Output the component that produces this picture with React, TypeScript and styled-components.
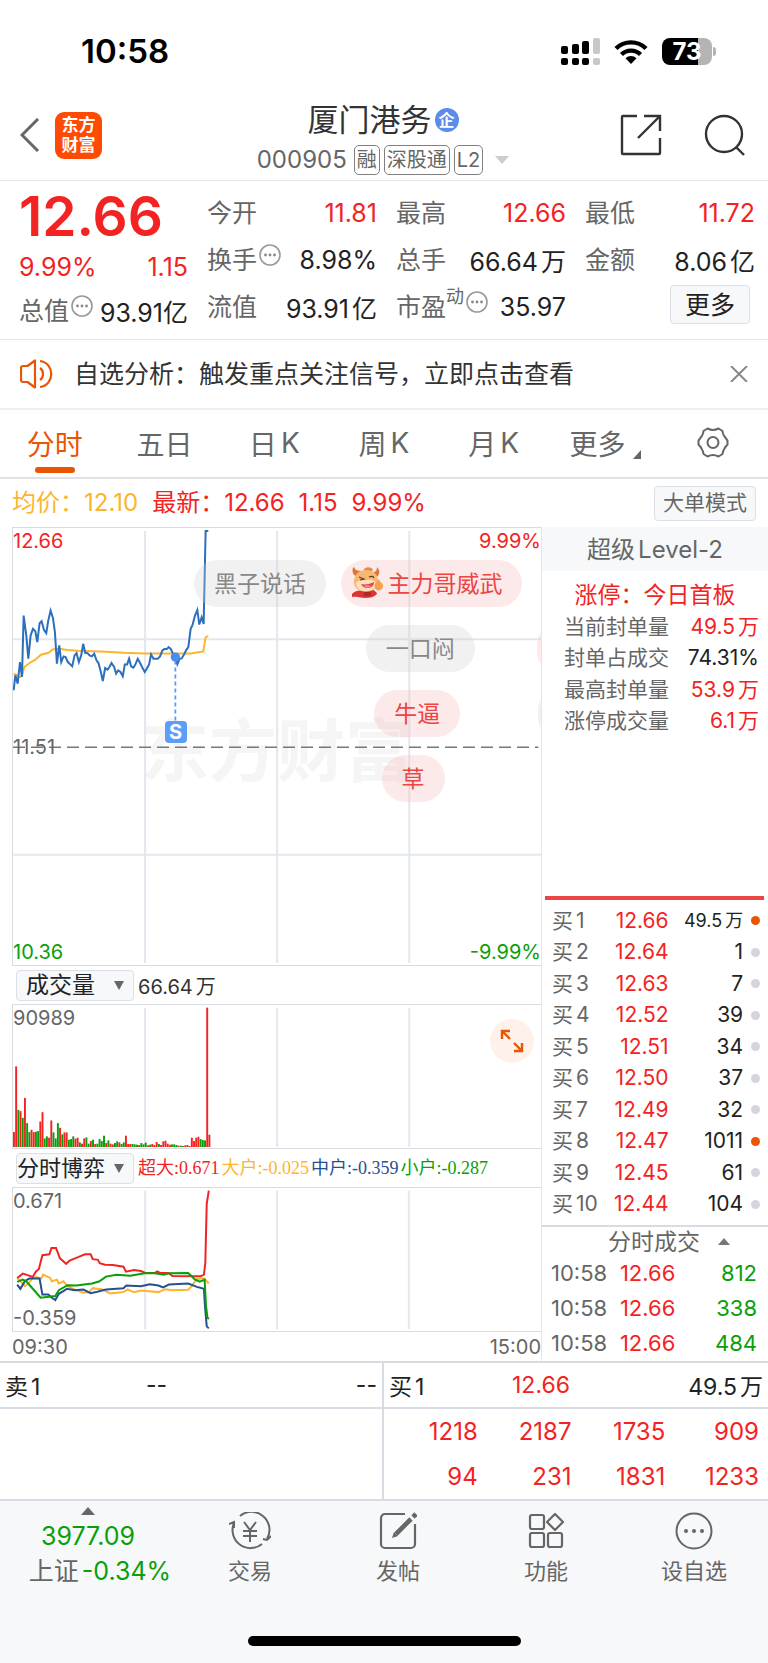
import React from 'react';
import styled, { createGlobalStyle } from 'styled-components';

const c = {
  red: '#f32323',
  green: '#0a9f0a',
  orange: '#ea5504',
  amber: '#fdb52e',
  ink: '#222',
  text: '#333',
  mute: '#666',
  line: '#e4e6ea',
  lineDark: '#d8dbe1',
  grid: '#e3e7ee',
  panel: '#f6f8fa',
  blue: '#2b6fbd',
  navy: '#27508f',
};

const GlobalStyle = createGlobalStyle`
  * { box-sizing: border-box; }
  body {
    margin: 0;
    background: #fff;
    color: ${c.text};
    font-family: Inter, "Noto Sans CJK SC", sans-serif;
    font-size: 22px;
  }
  button, select {
    margin: 0;
    padding: 0;
    border: 0;
    background: none;
    color: inherit;
    font: inherit;
  }
  svg { display: block; flex: none; }
  table { border-collapse: collapse; }
  td, th { padding: 0; font-weight: 400; }
`;

type Tone = 'red' | 'green' | 'ink' | 'mute';

const Page = styled.div`
  display: flex;
  flex-direction: column;
  min-width: 640px;
  min-height: 100vh;
`;

/* ---------- status bar ---------- */
const StatusBar = styled.div`
  display: flex;
  align-items: center;
  justify-content: space-between;
  height: 90px;
  padding: 12px 52px 0 81px;
  color: #000;
`;
const Clock = styled.time`
  font-size: 33px;
  font-weight: 600;
`;
const StatusIcons = styled.div`
  display: flex;
  align-items: center;
  gap: 14px;
`;
const Battery = styled.div`
  display: flex;
  align-items: center;
  gap: 1px;
`;
const BatteryBody = styled.div`
  width: 50px;
  height: 27px;
  border-radius: 8px;
  background: linear-gradient(90deg, #000 73%, #b4b4b4 73%);
  color: #fff;
  font-size: 24px;
  font-weight: 700;
  line-height: 27px;
  text-align: center;
`;
const BatteryTip = styled.div`
  width: 3px;
  height: 9px;
  border-radius: 0 3px 3px 0;
  background: #b4b4b4;
`;

/* ---------- header ---------- */
const Header = styled.header`
  display: grid;
  grid-template-columns: 1fr auto 1fr;
  align-items: center;
  height: 91px;
  padding: 0 22px 0 20px;
  border-bottom: 1px solid ${c.line};
`;
const HeaderSide = styled.div<{ $end?: boolean }>`
  display: flex;
  align-items: center;
  justify-content: ${(p) => (p.$end ? 'flex-end' : 'flex-start')};
  gap: ${(p) => (p.$end ? 42 : 15)}px;
`;
const IconButton = styled.button`
  display: flex;
  align-items: center;
  justify-content: center;
`;
const Logo = styled.div`
  display: flex;
  flex-direction: column;
  align-items: center;
  justify-content: center;
  width: 47px;
  height: 47px;
  border-radius: 9px;
  background: #ff4a03;
  color: #fff;
  font-size: 17px;
  font-weight: 700;
  line-height: 20px;
`;
const StockTitle = styled.div`
  display: flex;
  flex-direction: column;
  align-items: center;
  padding-top: 8px;
`;
const StockName = styled.h1`
  display: flex;
  align-items: center;
  gap: 3px;
  margin: 0;
  font-size: 31px;
  font-weight: 400;
  line-height: 42px;
`;
const CorpBadge = styled.span`
  width: 24px;
  height: 24px;
  border-radius: 50%;
  background: #5c8cea;
  color: #fff;
  font-size: 16px;
  font-weight: 700;
  line-height: 24px;
  text-align: center;
`;
const StockCode = styled.div`
  display: flex;
  align-items: center;
  gap: 4px;
  color: ${c.mute};
  font-size: 24px;
  line-height: 38px;
`;
const CodeText = styled.span`
  margin-right: 3px;
`;
const Tag = styled.span`
  padding: 0 2px;
  border: 1px solid #808080;
  border-radius: 5px;
  font-size: 20px;
  line-height: 28px;
`;
const CodeCaret = styled.svg`
  margin-left: 8px;
`;

/* ---------- quote summary ---------- */
const Quote = styled.section`
  display: grid;
  grid-template-columns: 169fr 548fr;
  gap: 19px;
  padding: 8px 13px 9px 19px;
  border-bottom: 1px solid ${c.line};
`;
const QuoteLead = styled.div`
  display: flex;
  flex-direction: column;
`;
const LastPrice = styled.div`
  color: ${c.red};
  font-size: 55px;
  font-weight: 600;
  line-height: 54px;
`;
const ChangeRow = styled.div`
  display: flex;
  justify-content: space-between;
  color: ${c.red};
  font-size: 25px;
  line-height: 48px;
`;
const QuoteGrid = styled.div`
  display: grid;
  grid-template-columns: repeat(3, 1fr);
  column-gap: 19px;
`;
const Stat = styled.div<{ $height?: number }>`
  display: flex;
  align-items: center;
  justify-content: space-between;
  height: ${(p) => p.$height ?? 47}px;
  white-space: nowrap;
`;
const StatLabel = styled.span`
  display: flex;
  align-items: center;
  padding-bottom: 4px;
  color: ${c.mute};
  font-size: 25px;
`;
const StatValue = styled.span<{ $tone?: Tone }>`
  color: ${(p) => c[p.$tone ?? 'ink']};
  font-size: 25px;
`;
const Raised = styled.span`
  align-self: flex-start;
  font-size: 18px;
  line-height: 20px;
`;
const RaisedDots = styled.svg`
  align-self: flex-start;
  margin: 4px 0 0 2px;
`;
const MoreButton = styled.button`
  width: 80px;
  height: 39px;
  margin: 0 5px 4px auto;
  border: 1px solid #dcdfe5;
  border-radius: 4px;
  background: ${c.panel};
  color: ${c.ink};
  font-size: 25px;
  line-height: 34px;
`;
const Unit = styled.span`
  margin-left: 3px;
`;

/* ---------- notice ---------- */
const Notice = styled.section`
  display: flex;
  align-items: center;
  height: 70px;
  padding: 0 20px;
  border-bottom: 2px solid #eeeff1;
`;
const NoticeText = styled.p`
  flex: 1;
  margin: 0 0 4px 20px;
  font-size: 25px;
`;

/* ---------- period tabs ---------- */
const Tabs = styled.nav`
  display: grid;
  grid-template-columns: repeat(7, 1fr);
  height: 69px;
  border-bottom: 2px solid #dfe1e6;
`;
const Tab = styled.button<{ $active?: boolean }>`
  position: relative;
  display: flex;
  align-items: center;
  justify-content: center;
  gap: 4px;
  padding-bottom: 2px;
  color: ${(p) => (p.$active ? c.orange : c.mute)};
  font-size: 28px;
  &::after {
    content: '';
    display: ${(p) => (p.$active ? 'block' : 'none')};
    position: absolute;
    bottom: 4px;
    width: 40px;
    height: 6px;
    border-radius: 3px;
    background: ${c.orange};
  }
`;
const TabCorner = styled.svg`
  align-self: flex-end;
  margin: 0 -4px 16px 4px;
`;

/* ---------- average / last line ---------- */
const PriceLine = styled.div`
  display: flex;
  align-items: center;
  gap: 14px;
  height: 48px;
  padding: 0 12px;
  color: ${c.red};
  font-size: 24px;
  line-height: 30px;
`;
const Average = styled.span`
  color: ${c.amber};
`;
const ModeButton = styled.button`
  width: 102px;
  height: 35px;
  margin-left: auto;
  border: 1px solid #dcdfe5;
  border-radius: 4px;
  background: ${c.panel};
  color: ${c.mute};
  font-size: 21px;
`;

/* ---------- chart area ---------- */
const Board = styled.main`
  display: grid;
  grid-template-columns: minmax(0, 542fr) minmax(0, 226fr);
`;
const Charts = styled.section`
  display: flex;
  flex-direction: column;
  padding-left: 12px;
  border-right: 1px solid ${c.line};
`;
const Plot = styled.div<{ $height: number }>`
  position: relative;
  height: ${(p) => p.$height}px;
  overflow: hidden;
  border: 1px solid ${c.lineDark};
  border-width: 1px 0 1px 1px;
`;
const PlotSvg = styled.svg`
  width: 100%;
  height: 100%;
  path, line { vector-effect: non-scaling-stroke; }
`;
const PlotLabel = styled.span<{ $v: 'top' | 'bottom' | 'middle'; $right?: boolean; $color?: string }>`
  position: absolute;
  ${(p) => (p.$right ? 'right: 0;' : 'left: 0;')}
  ${(p) => ({ top: 'top: 0;', bottom: 'bottom: 0;', middle: 'top: calc(50% - 13px);' })[p.$v]}
  color: ${(p) => p.$color ?? c.mute};
  font-size: 20px;
  line-height: 26px;
`;
const Watermark = styled.span`
  position: absolute;
  left: 50%;
  top: 51%;
  transform: translate(-50%, -50%);
  color: #f5f5f6;
  font-size: 68px;
  font-weight: 700;
  line-height: 72px;
  white-space: nowrap;
`;
const Layer = styled.div`
  position: absolute;
  inset: 0;
`;
const Chip = styled.span<{ $x: number; $row: number; $hot?: boolean }>`
  position: absolute;
  left: ${(p) => p.$x}%;
  top: ${(p) => 32 + p.$row * 65}px;
  display: flex;
  align-items: center;
  gap: 4px;
  height: 47px;
  padding: 0 20px 4px;
  border-radius: 24px;
  background: ${(p) => (p.$hot ? 'rgba(246, 190, 190, 0.32)' : 'rgba(210, 210, 210, 0.3)')};
  color: ${(p) => (p.$hot ? '#ee4444' : '#888')};
  font-size: 23px;
  white-space: nowrap;
`;
const Mascot = styled.svg`
  margin-left: -10px;
`;
const SellMark = styled.span`
  position: absolute;
  left: 28.7%;
  top: 193px;
  width: 22px;
  height: 22px;
  border-radius: 4px;
  background: #5c9dfb;
  color: #fff;
  font-size: 20px;
  font-weight: 700;
  line-height: 22px;
  text-align: center;
`;
const ChartBar = styled.div`
  display: flex;
  align-items: center;
  gap: 4px;
  height: 38px;
  padding-left: 4px;
`;
const Picker = styled.label`
  position: relative;
  display: flex;
  align-items: center;
  color: ${c.mute};
`;
const PickerSelect = styled.select<{ $indent: number }>`
  appearance: none;
  width: 118px;
  height: 31px;
  padding-left: ${(p) => p.$indent}px;
  border: 1px solid #dcdfe5;
  border-radius: 4px;
  background: ${c.panel};
  color: ${c.ink};
  font-size: ${(p) => (p.$indent ? 23 : 22)}px;
`;
const PickerCaret = styled.svg`
  position: absolute;
  right: 10px;
  pointer-events: none;
`;
const Total = styled.span`
  color: ${c.text};
  font-size: 20px;
`;
const Legend = styled.span`
  display: flex;
  gap: 2px;
  font-family: "Liberation Serif", "Noto Sans CJK SC", serif;
  font-size: 18px;
  line-height: 24px;
  white-space: nowrap;
`;
const LegendItem = styled.span<{ $color: string }>`
  color: ${(p) => p.$color};
`;
const ExpandButton = styled.button`
  position: absolute;
  right: 7px;
  top: 14px;
  display: flex;
  align-items: center;
  justify-content: center;
  width: 44px;
  height: 44px;
  border-radius: 50%;
  background: #fdf1ea;
`;
const TimeAxis = styled.div`
  display: flex;
  align-items: center;
  justify-content: space-between;
  height: 29px;
  color: ${c.mute};
  font-size: 20px;
`;

/* ---------- level-2 side ---------- */
const Side = styled.aside`
  display: flex;
  flex-direction: column;
`;
const SideTitle = styled.h2`
  height: 44px;
  margin: 0;
  background: ${c.panel};
  color: ${c.mute};
  font-size: 24px;
  font-weight: 400;
  line-height: 46px;
  text-align: center;
`;
const LimitTitle = styled.p`
  margin: 8px 0 0;
  color: ${c.red};
  font-size: 23px;
  line-height: 32px;
  text-align: center;
`;
const LimitTable = styled.table`
  width: 100%;
  height: 126px;
  color: ${c.mute};
  font-size: 21px;
  line-height: 26px;
  white-space: nowrap;
  th { padding-left: 22px; text-align: left; }
  td { padding-right: 9px; text-align: right; }
`;
const ToneCell = styled.td<{ $tone: Tone; $small?: boolean }>`
  color: ${(p) => c[p.$tone]};
  ${(p) => (p.$small ? 'font-size: 18px;' : '')}
`;
const BidRule = styled.div`
  height: 4px;
  margin: auto 4px 5px 3px;
  background: #ec4545;
`;
const BidTable = styled.table`
  width: 100%;
  height: 315px;
  table-layout: fixed;
  font-size: 21px;
  line-height: 26px;
  white-space: nowrap;
  th { padding-left: 10px; color: ${c.mute}; text-align: left; }
  td { text-align: right; }
`;
const Col = styled.col<{ $share: number }>`
  width: ${(p) => p.$share}%;
`;
const Dot = styled.span<{ $on?: boolean }>`
  display: block;
  width: 9px;
  height: 9px;
  margin: 0 8px 0 auto;
  border-radius: 50%;
  background: ${(p) => (p.$on ? c.orange : '#d3d7dd')};
`;
const TradesToggle = styled.button`
  display: flex;
  align-items: center;
  justify-content: center;
  gap: 18px;
  height: 31px;
  margin-top: 5px;
  padding-left: 28px;
  border-top: 2px solid ${c.lineDark};
  color: ${c.mute};
  font-size: 23px;
  line-height: 26px;
`;
const TradeTable = styled.table`
  width: 100%;
  table-layout: fixed;
  font-size: 22px;
  line-height: 35px;
  th { padding-left: 9px; color: ${c.mute}; text-align: left; }
  td { text-align: right; }
  td:last-child { padding-right: 11px; }
`;

/* ---------- order depth strip ---------- */
const Depth = styled.section`
  display: grid;
  grid-template-columns: 382fr 386fr;
  border-top: 2px solid ${c.lineDark};
  border-bottom: 2px solid ${c.lineDark};
`;
const DepthSide = styled.div`
  & + & { border-left: 2px solid ${c.lineDark}; }
`;
const DepthHead = styled.div`
  display: grid;
  grid-template-columns: 78px 1fr 1fr;
  align-items: center;
  height: 46px;
  padding: 0 5px;
  border-bottom: 2px solid ${c.lineDark};
  color: ${c.ink};
  font-size: 23px;
`;
const DepthPrice = styled.span<{ $tone: Tone }>`
  justify-self: center;
  color: ${(p) => c[p.$tone]};
`;
const DepthVolume = styled.span`
  justify-self: end;
`;
const QueueTable = styled.table`
  width: calc(100% - 9px);
  table-layout: fixed;
  color: ${c.red};
  font-size: 24px;
  line-height: 45px;
  td { text-align: right; }
`;

/* ---------- bottom navigation ---------- */
const Footer = styled.footer`
  display: flex;
  flex: 1;
  flex-direction: column;
  justify-content: space-between;
  align-items: center;
  background: ${c.panel};
`;
const NavBar = styled.nav`
  display: grid;
  grid-template-columns: 176px repeat(4, 1fr);
  width: 100%;
  padding-top: 6px;
`;
const NavItem = styled.button`
  display: flex;
  flex-direction: column;
  align-items: center;
  gap: 4px;
  padding-top: 5px;
  color: ${c.mute};
  font-size: 22px;
  line-height: 34px;
`;
const IndexItem = styled.button`
  display: flex;
  flex-direction: column;
  align-items: center;
  color: ${c.green};
  font-size: 25px;
  line-height: 35px;
`;
const IndexCaret = styled.svg`
  margin-bottom: 4px;
`;
const IndexChange = styled.span`
  padding-left: 24px;
`;
const IndexName = styled.span`
  margin-right: 3px;
  color: ${c.mute};
`;
const HomeIndicator = styled.div`
  width: 273px;
  height: 10px;
  margin-bottom: 17px;
  border-radius: 5px;
  background: #000;
`;

/* ---------- data ---------- */
const PRICE =
  '38,510 43,465 50,490 57,425 63,470 68,285 76,345 82,415 89,345 96,325 103,332 109,365 116,308 122,302 129,328 136,338 142,300 149,270 156,292 162,335 168,430 175,375 181,425 188,408 194,410 201,425 208,432 214,438 221,405 227,398 234,425 241,405 247,370 253,397 260,398 266,405 273,408 280,400 287,420 293,428 300,455 306,482 313,443 320,448 326,440 332,428 340,440 346,460 352,450 359,455 366,468 372,432 379,432 385,415 391,438 398,442 404,432 411,415 418,428 425,442 432,455 438,445 445,432 451,402 458,415 471,415 478,408 485,390 491,386 498,386 504,380 510,385 517,400 524,412 530,432 537,415 543,414 550,402 557,388 563,380 570,325 576,312 583,285 590,268 596,312 603,290 609,310 615,30 623,30';
const AVERAGE =
  '38,460 57,470 63,465 70,440 90,425 103,418 120,403 143,397 155,387 175,385 200,389 230,391 300,393 370,397 430,399 570,399 608,393 615,350 623,347';

const VOLUME =
  'r45 r243 g112 r108 g88 r148 g72 g45 r52 r45 g46 g48 r77 r105 g26 g32 r28 r80 g44 g26 g72 r58 g38 r44 r44 g22 g24 g32 r25 r28 g14 r10 r26 g29 g10 r18 g22 r9 g10 g24 g18 g34 r12 g20 r10 r8 g12 g17 r14 g9 g14 r34 r9 r9 g9 g8 g7 r6 g12 g8 g13 r5 g7 r9 r6 r15 g9 r6 r17 r19 r10 r7 g8 g8 g6 r4 g4 g3 r5 r6 r3 r28 r18 r28 r31 g24 g21 g20 r420 r37'
    .split(' ')
    .map((s) => ({ up: s[0] === 'r', size: Number(s.slice(1)) }));

const FLOWS = [
  {
    color: c.amber,
    points:
      '46,415 56,425 68,440 80,430 90,415 100,412 115,417 120,405 140,415 145,425 160,420 165,432 178,425 190,440 210,450 235,460 252,458 262,446 290,450 312,462 350,458 362,450 380,458 400,453 450,458 470,449 490,452 535,451 545,440 560,418 580,416 594,432',
  },
  {
    color: c.red,
    points:
      '46,415 62,402 80,408 90,412 100,395 108,388 118,346 138,343 144,324 157,324 168,355 186,372 196,362 220,352 240,343 256,343 262,358 277,360 282,370 297,375 320,376 350,381 357,396 380,391 400,394 412,400 440,400 446,395 455,400 478,400 490,409 570,410 580,405 584,370 588,190 594,150',
  },
  {
    color: c.navy,
    points:
      '46,435 55,448 68,425 80,417 110,417 118,465 135,465 145,475 155,482 165,463 178,455 188,448 210,452 235,450 256,461 275,457 300,450 350,446 358,438 400,440 425,434 450,438 463,444 480,435 535,432 560,442 580,448 583,500 588,562 594,568',
  },
  {
    color: c.green,
    points:
      '46,427 62,420 72,425 90,447 113,475 155,470 165,452 190,437 215,438 260,432 280,426 300,411 330,405 370,408 410,401 440,401 465,405 480,401 535,400 555,420 568,426 582,420 586,500 590,535 594,540',
  },
];

const LEGEND: [string, string][] = [
  ['超大:0.671', c.red],
  ['大户:-0.025', c.amber],
  ['中户:-0.359', c.navy],
  ['小户:-0.287', c.green],
];

const LIMITS: [string, string, Tone][] = [
  ['当前封单量', '49.5万', 'red'],
  ['封单占成交', '74.31%', 'ink'],
  ['最高封单量', '53.9万', 'red'],
  ['涨停成交量', '6.1万', 'red'],
];

const BIDS: [string, string, boolean?][] = [
  ['12.66', '49.5万', true],
  ['12.64', '1'],
  ['12.63', '7'],
  ['12.52', '39'],
  ['12.51', '34'],
  ['12.50', '37'],
  ['12.49', '32'],
  ['12.47', '1011', true],
  ['12.45', '61'],
  ['12.44', '104'],
];

const TRADES = ['812', '338', '484'];
const QUEUE = [
  ['1218', '2187', '1735', '909'],
  ['94', '231', '1831', '1233'],
];

/* ---------- small pieces ---------- */
const Amount = ({ value }: { value: string }) => {
  const m = value.match(/^(.*?)([万亿])$/);
  return m ? (
    <>
      {m[1]}
      <Unit>{m[2]}</Unit>
    </>
  ) : (
    <>{value}</>
  );
};

const Dots = () => (
  <RaisedDots width="22" height="22" viewBox="0 0 22 22" aria-hidden="true">
    <circle cx="11" cy="11" r="10" fill="none" stroke="#999" strokeWidth="1.6" />
    <g fill="#888">
      <circle cx="6.5" cy="11" r="1.4" />
      <circle cx="11" cy="11" r="1.4" />
      <circle cx="15.5" cy="11" r="1.4" />
    </g>
  </RaisedDots>
);

const toPath = (points: string) => 'M' + points.split(' ').join('L');

const Bull = () => (
  <Mascot width="32" height="32" viewBox="0 0 32 32" aria-hidden="true">
    <path d="M3 9C1 6 1 2 3 1c1 3 4 4 7 4L8 12zM22 6c3 0 4-2 4-5 3 3 3 7 0 10z" fill="#d9773a" />
    <path d="M13 3c3-3 8-2 9 1l-4 4-5-1z" fill="#e58a4a" />
    <path d="M15 4c8 0 12 5 12 12 0 6-5 10-12 10S3 22 3 16C3 9 7 4 15 4z" fill="#f8b873" />
    <path d="M5 17c3-4 8-2 11-3 4-1 7 0 9 3 0 6-4 8-10 8S6 23 5 17z" fill="#fde0c0" />
    <path d="M10 18c4 1 9 0 13-2 0 4-3 6-7 6-3 0-5-2-6-4z" fill="#e8434f" />
    <path d="M13 20c2-1 5-1 7 0-2 2-5 2-7 0z" fill="#f78d8d" />
    <path d="M8 11l5 2-4 1M18 11c2-1 4-1 5 1" fill="none" stroke="#5b3a24" strokeWidth="1.2" />
    <path d="M1 28c2-2 5-4 9-3 4 1 8 1 12-1 2 1 4 2 4 4-3 3-7 4-12 4-4 0-7-2-13-1z" fill="#dc3434" />
    <path d="M13 27h7M13 29h7" stroke="#8e1c1c" />
    <path d="M27 14c1-1 2 0 2 2 3 1 4 4 2 7-2 2-6 2-7-1s0-5 3-8z" fill="#f3a04f" />
  </Mascot>
);

const PriceChart = () => (
  <Plot $height={439}>
    <Watermark>东方财富</Watermark>
    <Layer>
      <PlotSvg viewBox="36 21 1587 1317" preserveAspectRatio="none" role="img" aria-label="分时走势">
        <g stroke={c.grid} strokeWidth="2">
          <path d="M433 30V1332M830 30V1332M1227 30V1332M36 356H1623M36 1006H1623" fill="none" />
        </g>
        <path d="M36 682H1615" stroke="#777" strokeWidth="1.5" strokeDasharray="12 6" />
        <path d={toPath(AVERAGE)} fill="none" stroke={c.amber} strokeWidth="2" />
        <path d={toPath(PRICE)} fill="none" stroke={c.blue} strokeWidth="2" />
        <path d="M524 420V604" stroke="#5c9dfb" strokeWidth="1.8" strokeDasharray="4 3" />
        <circle cx="524" cy="410" r="14" fill="#4a8df0" />
      </PlotSvg>
    </Layer>
    <PlotLabel $v="top" $color={c.red}>12.66</PlotLabel>
    <PlotLabel $v="top" $right $color={c.red}>9.99%</PlotLabel>
    <PlotLabel $v="middle">11.51</PlotLabel>
    <PlotLabel $v="bottom" $color={c.green}>10.36</PlotLabel>
    <PlotLabel $v="bottom" $right $color={c.green}>-9.99%</PlotLabel>
    <SellMark>S</SellMark>
    <Chip $x={34.3} $row={0}>黑子说话</Chip>
    <Chip $x={62.2} $row={0} $hot><Bull />主力哥威武</Chip>
    <Chip $x={66.8} $row={1}>一口闷</Chip>
    <Chip $x={68.4} $row={2} $hot>牛逼</Chip>
    <Chip $x={69.8} $row={3} $hot>草</Chip>
    <Chip $x={99.3} $row={1} $hot />
    <Chip $x={99.5} $row={2} />
  </Plot>
);

const VolumeChart = () => (
  <Plot $height={145}>
    <PlotSvg viewBox="36 224 1587 431" preserveAspectRatio="none" role="img" aria-label="成交量">
      <path d="M433 232V652M830 232V652M1227 232V652" stroke={c.grid} strokeWidth="2" />
      {VOLUME.map((bar, i) => (
        <rect
          key={i}
          x={36 + i * 6.6}
          y={652 - bar.size}
          width="5.8"
          height={bar.size}
          fill={bar.up ? c.red : c.green}
        />
      ))}
    </PlotSvg>
    <PlotLabel $v="top">90989</PlotLabel>
    <ExpandButton aria-label="全屏">
      <svg width="24" height="24" viewBox="0 0 24 24" fill="none" stroke={c.orange} strokeWidth="2.4">
        <path d="M2 10V2h8M2 2l8 8M22 14v8h-8M22 22l-8-8" />
      </svg>
    </ExpandButton>
  </Plot>
);

const FlowChart = () => (
  <Plot $height={145}>
    <PlotSvg viewBox="34 142 1510 434" preserveAspectRatio="none" role="img" aria-label="分时博弈">
      <path d="M412 150V570M789 150V570M1166 150V570" stroke={c.grid} strokeWidth="2" />
      {FLOWS.map((f) => (
        <path key={f.color} d={toPath(f.points)} fill="none" stroke={f.color} strokeWidth="2" />
      ))}
    </PlotSvg>
    <PlotLabel $v="top">0.671</PlotLabel>
    <PlotLabel $v="bottom">-0.359</PlotLabel>
  </Plot>
);

const IndicatorPicker = ({ value, indent }: { value: string; indent: number }) => (
  <Picker>
    <PickerSelect $indent={indent} aria-label="指标" defaultValue={value}>
      <option>成交量</option>
      <option>分时博弈</option>
    </PickerSelect>
    <PickerCaret width="10" height="9" viewBox="0 0 10 9" aria-hidden="true">
      <path d="M0 0h10L5 9z" fill="#666" />
    </PickerCaret>
  </Picker>
);

export default function App() {
  return (
    <Page>
      <GlobalStyle />
      <StatusBar>
        <Clock>10:58</Clock>
        <StatusIcons>
          <svg width="39" height="27" viewBox="0 0 39 27" aria-hidden="true">
            <g fill="#000">
              <rect x="0" y="8" width="7" height="8" rx="2" />
              <rect x="11" y="6" width="7" height="10" rx="2" />
              <rect x="21" y="3" width="7" height="13" rx="2" />
              <rect x="0" y="20" width="7" height="7" rx="2" />
              <rect x="11" y="20" width="7" height="7" rx="2" />
              <rect x="21" y="20" width="7" height="7" rx="2" />
            </g>
            <g fill="#c8c8c8">
              <rect x="32" y="0" width="7" height="16" rx="2" />
              <rect x="32" y="20" width="7" height="7" rx="2" />
            </g>
          </svg>
          <svg width="34" height="25" viewBox="0 0 34 25" aria-hidden="true">
            <g fill="none" stroke="#000" strokeWidth="4.4">
              <path d="M2 9.5a21.5 21.5 0 0 1 30 0" />
              <path d="M7.5 15.5a13.5 13.5 0 0 1 19 0" />
            </g>
            <path d="M17 25l-5.5-5.8a8 8 0 0 1 11 0z" fill="#000" />
          </svg>
          <Battery>
            <BatteryBody>73</BatteryBody>
            <BatteryTip />
          </Battery>
        </StatusIcons>
      </StatusBar>

      <Header>
        <HeaderSide>
          <IconButton aria-label="返回">
            <svg width="20" height="34" viewBox="0 0 20 34" fill="none" stroke="#666" strokeWidth="3">
              <path d="M18 1L2 17l16 16" />
            </svg>
          </IconButton>
          <Logo>
            <span>东方</span>
            <span>财富</span>
          </Logo>
        </HeaderSide>
        <StockTitle>
          <StockName>
            厦门港务<CorpBadge>企</CorpBadge>
          </StockName>
          <StockCode>
            <CodeText>000905</CodeText>
            <Tag>融</Tag>
            <Tag>深股通</Tag>
            <Tag>L2</Tag>
            <CodeCaret width="14" height="8" viewBox="0 0 14 8" aria-hidden="true">
              <path d="M0 0h14L7 8z" fill="#ccc" />
            </CodeCaret>
          </StockCode>
        </StockTitle>
        <HeaderSide $end>
          <IconButton aria-label="分享">
            <svg width="42" height="42" viewBox="0 0 42 42" fill="none" stroke="#333" strokeWidth="2.4">
              <path d="M17 2H3a1 1 0 0 0-1 1v36a1 1 0 0 0 1 1h36a1 1 0 0 0 1-1V24M24 2h16v15M40 2L18 24" />
            </svg>
          </IconButton>
          <IconButton aria-label="搜索">
            <svg width="42" height="42" viewBox="0 0 42 42" fill="none" stroke="#333" strokeWidth="2.4">
              <circle cx="20" cy="20" r="18" />
              <path d="M32 33l8 8" />
            </svg>
          </IconButton>
        </HeaderSide>
      </Header>

      <Quote>
        <QuoteLead>
          <LastPrice>12.66</LastPrice>
          <ChangeRow>
            <span>9.99%</span>
            <span>1.15</span>
          </ChangeRow>
          <Stat $height={39}>
            <StatLabel>总值<Dots /></StatLabel>
            <StatValue>93.91亿</StatValue>
          </Stat>
        </QuoteLead>
        <QuoteGrid>
          <Stat><StatLabel>今开</StatLabel><StatValue $tone="red">11.81</StatValue></Stat>
          <Stat><StatLabel>最高</StatLabel><StatValue $tone="red">12.66</StatValue></Stat>
          <Stat><StatLabel>最低</StatLabel><StatValue $tone="red">11.72</StatValue></Stat>
          <Stat><StatLabel>换手<Dots /></StatLabel><StatValue>8.98%</StatValue></Stat>
          <Stat><StatLabel>总手</StatLabel><StatValue><Amount value="66.64万" /></StatValue></Stat>
          <Stat><StatLabel>金额</StatLabel><StatValue><Amount value="8.06亿" /></StatValue></Stat>
          <Stat><StatLabel>流值</StatLabel><StatValue><Amount value="93.91亿" /></StatValue></Stat>
          <Stat><StatLabel>市盈<Raised>动</Raised><Dots /></StatLabel><StatValue>35.97</StatValue></Stat>
          <Stat><MoreButton>更多</MoreButton></Stat>
        </QuoteGrid>
      </Quote>

      <Notice>
        <svg width="34" height="30" viewBox="0 0 34 30" fill="none" stroke={c.orange} strokeWidth="2.2" aria-hidden="true">
          <path d="M15 1.5v27L7.5 23H3a2 2 0 0 1-2-2V9a2 2 0 0 1 2-2h4.5z" strokeLinejoin="round" />
          <path d="M20 9c4 2.5 4 9.5 0 12M20 2c15 2 15 24 0 26" />
        </svg>
        <NoticeText>自选分析：触发重点关注信号，立即点击查看</NoticeText>
        <IconButton aria-label="关闭">
          <svg width="18" height="16" viewBox="0 0 18 16" stroke="#888" strokeWidth="2">
            <path d="M1 0l16 16M17 0L1 16" />
          </svg>
        </IconButton>
      </Notice>

      <Tabs>
        <Tab $active>分时</Tab>
        <Tab>五日</Tab>
        <Tab>日<span>K</span></Tab>
        <Tab>周<span>K</span></Tab>
        <Tab>月<span>K</span></Tab>
        <Tab>
          更多
          <TabCorner width="8" height="9" viewBox="0 0 8 9" aria-hidden="true">
            <path d="M8 0v9H0z" fill="#666" />
          </TabCorner>
        </Tab>
        <Tab aria-label="设置">
          <svg width="32" height="31" viewBox="0 0 32 31" fill="none" stroke="#666" strokeWidth="2">
            <path
              d="M10.500 1.500c2 1 3.500 1.500 5.500 1.500s3.500-.5 5.500-1.500l4 2.500c.2 2.500.7 4 2 5.500s2 3 3 4v4c-1.500 1.500-2.300 2.500-3 4-1.300 2-1.800 3.500-2 5.500l-4 2.500c-2-1-3.500-1.500-5.500-1.500s-3.500.5-5.500 1.500l-4-2.500c-.2-2-.7-3.500-2-5.500-.7-1.500-1.500-2.500-3-4v-4c1-1 1.700-2.500 3-4s1.800-3 2-5.500z"
              strokeLinejoin="round"
            />
            <circle cx="16" cy="15.5" r="5.5" />
          </svg>
        </Tab>
      </Tabs>

      <PriceLine>
        <Average>均价：12.10</Average>
        <span>最新：12.66</span>
        <span>1.15</span>
        <span>9.99%</span>
        <ModeButton>大单模式</ModeButton>
      </PriceLine>

      <Board>
        <Charts>
          <PriceChart />
          <ChartBar>
            <IndicatorPicker value="成交量" indent={9} />
            <Total><Amount value="66.64万" /></Total>
          </ChartBar>
          <VolumeChart />
          <ChartBar>
            <IndicatorPicker value="分时博弈" indent={0} />
            <Legend>
              {LEGEND.map(([text, color]) => (
                <LegendItem key={text} $color={color}>{text}</LegendItem>
              ))}
            </Legend>
          </ChartBar>
          <FlowChart />
          <TimeAxis>
            <span>09:30</span>
            <span>15:00</span>
          </TimeAxis>
        </Charts>

        <Side>
          <SideTitle>超级<Unit>Level-2</Unit></SideTitle>
          <LimitTitle>涨停：今日首板</LimitTitle>
          <LimitTable>
            <tbody>
              {LIMITS.map(([label, value, tone]) => (
                <tr key={label}>
                  <th scope="row">{label}</th>
                  <ToneCell $tone={tone}><Amount value={value} /></ToneCell>
                </tr>
              ))}
            </tbody>
          </LimitTable>
          <BidRule />
          <BidTable>
            <colgroup>
              <Col $share={30} />
              <Col $share={26} />
              <Col $share={33} />
              <Col $share={11} />
            </colgroup>
            <tbody>
              {BIDS.map(([price, volume, on], i) => (
                <tr key={price}>
                  <th scope="row">买<Unit>{i + 1}</Unit></th>
                  <ToneCell $tone="red">{price}</ToneCell>
                  <ToneCell $tone="ink" $small={volume.endsWith('万')}><Amount value={volume} /></ToneCell>
                  <td><Dot $on={on} /></td>
                </tr>
              ))}
            </tbody>
          </BidTable>
          <TradesToggle>
            分时成交
            <svg width="12" height="7" viewBox="0 0 12 7" aria-hidden="true">
              <path d="M0 7h12L6 0z" fill="#777" />
            </svg>
          </TradesToggle>
          <TradeTable>
            <colgroup>
              <Col $share={33} />
              <Col $share={26} />
              <Col $share={41} />
            </colgroup>
            <tbody>
              {TRADES.map((volume) => (
                <tr key={volume}>
                  <th scope="row">10:58</th>
                  <ToneCell $tone="red">12.66</ToneCell>
                  <ToneCell $tone="green">{volume}</ToneCell>
                </tr>
              ))}
            </tbody>
          </TradeTable>
        </Side>
      </Board>

      <Depth>
        <DepthSide>
          <DepthHead>
            <span>卖<Unit>1</Unit></span>
            <DepthPrice $tone="ink">--</DepthPrice>
            <DepthVolume>--</DepthVolume>
          </DepthHead>
        </DepthSide>
        <DepthSide>
          <DepthHead>
            <span>买<Unit>1</Unit></span>
            <DepthPrice $tone="red">12.66</DepthPrice>
            <DepthVolume><Amount value="49.5万" /></DepthVolume>
          </DepthHead>
          <QueueTable>
            <tbody>
              {QUEUE.map((row) => (
                <tr key={row[0]}>
                  {row.map((n) => <td key={n}>{n}</td>)}
                </tr>
              ))}
            </tbody>
          </QueueTable>
        </DepthSide>
      </Depth>

      <Footer>
        <NavBar>
          <IndexItem>
            <IndexCaret width="14" height="8" viewBox="0 0 14 8" aria-hidden="true">
              <path d="M0 8h14L7 0z" fill="#666" />
            </IndexCaret>
            <span>3977.09</span>
            <IndexChange><IndexName>上证</IndexName>-0.34%</IndexChange>
          </IndexItem>
          <NavItem>
            <svg width="42" height="38" viewBox="0 0 42 38" fill="none" stroke="#666" strokeWidth="2" aria-hidden="true">
              <path d="M11 4A18 18 0 0 1 38 27M33 32A18 18 0 0 1 5 11" />
              <path d="M0 12l5-2v6M42 24l-4 4-4-1" />
              <path d="M15 10l6 8 6-8M21 18v12M14 19h14M14 24h14" />
            </svg>
            交易
          </NavItem>
          <NavItem>
            <svg width="38" height="38" viewBox="0 0 38 38" fill="none" stroke="#666" strokeWidth="2.2" aria-hidden="true">
              <path d="M26 2H6a4 4 0 0 0-4 4v26a4 4 0 0 0 4 4h26a4 4 0 0 0 4-4V12" />
              <path d="M32 7L17 22" strokeWidth="4.6" />
              <path d="M34 5l3-3" strokeWidth="4.6" />
              <path d="M13 26l2-6 4 4z" fill="#666" stroke="none" />
            </svg>
            发帖
          </NavItem>
          <NavItem>
            <svg width="38" height="38" viewBox="0 0 38 38" fill="none" stroke="#666" strokeWidth="2.2" aria-hidden="true">
              <rect x="3" y="3" width="14" height="14" rx="2" />
              <path d="M28 2l8 8-8 8-8-8z" strokeLinejoin="round" />
              <rect x="3" y="21" width="14" height="14" rx="2" />
              <rect x="21" y="21" width="14" height="14" rx="2" />
            </svg>
            功能
          </NavItem>
          <NavItem>
            <svg width="38" height="38" viewBox="0 0 38 38" aria-hidden="true">
              <circle cx="19" cy="19" r="17.5" fill="none" stroke="#666" strokeWidth="2" />
              <g fill="#666">
                <circle cx="11" cy="19" r="2" />
                <circle cx="19" cy="19" r="2" />
                <circle cx="27" cy="19" r="2" />
              </g>
            </svg>
            设自选
          </NavItem>
        </NavBar>
        <HomeIndicator />
      </Footer>
    </Page>
  );
}
